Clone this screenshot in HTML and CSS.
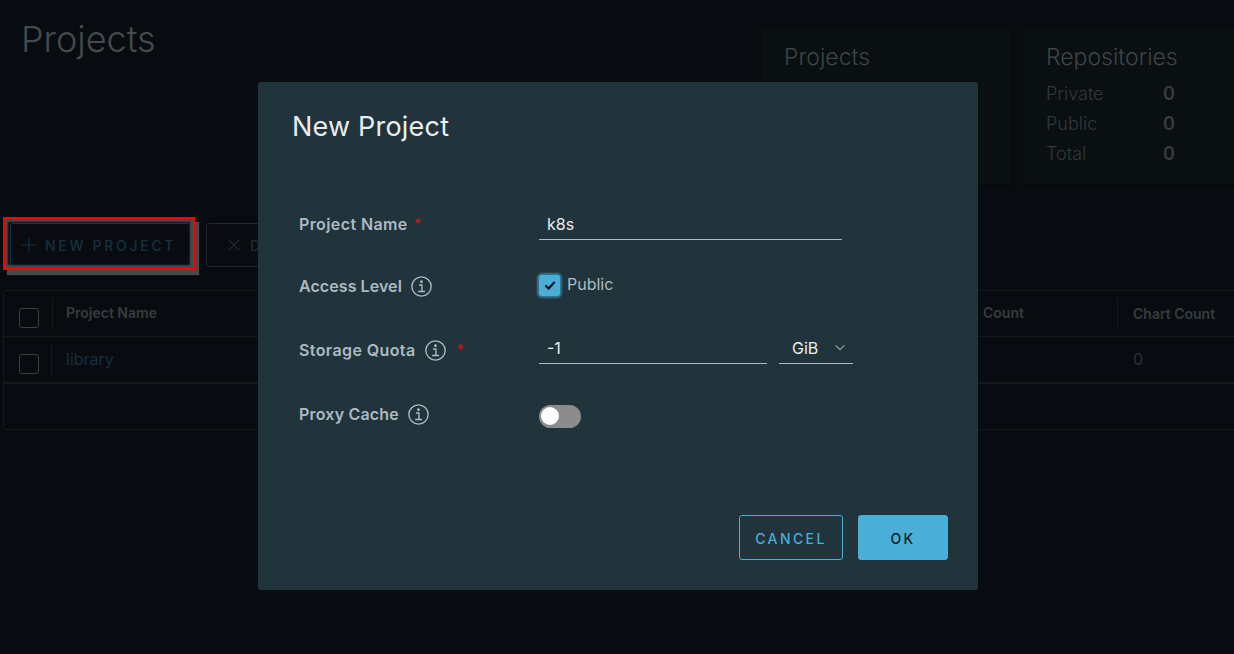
FILE: index.html
```html
<!DOCTYPE html>
<html lang="en">
<head>
<meta charset="utf-8">
<title>Projects</title>
<link rel="stylesheet" href="styles.css">
</head>
<body>
<main class="page">
  <section class="top">
    <h1 class="page-title">Projects</h1>
    <div class="cards">
      <article class="card card-projects">
        <h2 class="card-title">Projects</h2>
      </article>
      <article class="card card-repos">
        <h2 class="card-title">Repositories</h2>
        <dl class="stats">
          <div class="stat"><dt>Private</dt><dd>0</dd></div>
          <div class="stat"><dt>Public</dt><dd>0</dd></div>
          <div class="stat"><dt>Total</dt><dd>0</dd></div>
        </dl>
      </article>
    </div>
  </section>

  <section class="toolbar">
    <button class="tool tool-new" type="button">
      <svg class="tool-icon" viewBox="0 0 16 16"><path d="M8 1v14M1 8h14"/></svg>
      <span>NEW PROJECT</span>
    </button>
    <button class="tool tool-delete" type="button">
      <svg class="tool-icon" viewBox="0 0 16 16"><path d="M2.5 2.5l11 11M13.5 2.5l-11 11"/></svg>
      <span>DELETE</span>
    </button>
  </section>

  <section class="grid">
    <div class="grid-row grid-head">
      <span class="cell-check"><span class="box"></span></span>
      <span class="cell-name">Project Name</span>
      <span class="cell-count">Count</span>
      <span class="cell-chart">Chart Count</span>
    </div>
    <div class="grid-row grid-body">
      <span class="cell-check"><span class="box"></span></span>
      <span class="cell-name link">library</span>
      <span class="cell-count"></span>
      <span class="cell-chart cell-plain">0</span>
    </div>
    <div class="grid-foot"></div>
  </section>
</main>

<div class="modal">
  <h3 class="modal-title">New Project</h3>
  <form class="form">
    <div class="field">
      <label class="label label-first">Project Name<span class="req req-name">*</span></label>
      <div class="control"><span class="input input-name">k8s</span></div>
    </div>
    <div class="field">
      <label class="label label-access">Access Level
        <svg class="info" viewBox="0 0 20 20"><circle cx="10" cy="10" r="9.2"/><path d="M7.6 8.6h2.8v6M6.8 14.8h6.6"/><circle class="dot" cx="10" cy="5.4" r="1.3"/></svg>
      </label>
      <div class="control control-check">
        <span class="check"><svg viewBox="0 0 12 12"><path d="M2 6.2l2.8 2.8L10 3.4"/></svg></span>
        <span class="check-label">Public</span>
      </div>
    </div>
    <div class="field">
      <label class="label">Storage Quota
        <svg class="info" viewBox="0 0 20 20"><circle cx="10" cy="10" r="9.2"/><path d="M7.6 8.6h2.8v6M6.8 14.8h6.6"/><circle class="dot" cx="10" cy="5.4" r="1.3"/></svg>
        <span class="req req-quota">*</span>
      </label>
      <div class="control control-quota">
        <span class="input input-quota">-1</span>
        <span class="select">GiB<svg viewBox="0 0 12 8"><path d="M1 1.5l5 5 5-5"/></svg></span>
      </div>
    </div>
    <div class="field">
      <label class="label label-proxy">Proxy Cache
        <svg class="info" viewBox="0 0 20 20"><circle cx="10" cy="10" r="9.2"/><path d="M7.6 8.6h2.8v6M6.8 14.8h6.6"/><circle class="dot" cx="10" cy="5.4" r="1.3"/></svg>
      </label>
      <div class="control"><span class="toggle"><span class="knob"></span></span></div>
    </div>
  </form>
  <div class="modal-foot">
    <button class="btn btn-cancel" type="button">CANCEL</button>
    <button class="btn btn-ok" type="button">OK</button>
  </div>
</div>
</body>
</html>
```
FILE: styles.css
```css
*, *::before, *::after { box-sizing: border-box; }
html, body { margin: 0; height: 100%; }
body {
  background: #080c10;
  font-family: Inter, "Noto Sans", sans-serif;
  overflow: hidden;
  width: 1234px;
  height: 654px;
  position: relative;
}
.page { padding-left: 3px; width: 1234px; height: 654px; overflow: hidden; }

.top { display: flex; height: 184px; }
.page-title {
  margin: 15px 0 0 18px;
  font: 300 36px/48px Inter, sans-serif;
  color: #444a4d;
  width: 741px;
  flex: none;
}
.cards { display: flex; gap: 14px; padding-top: 28px; flex: none; }
.card {
  width: 248px;
  height: 156px;
  background: #0a0f12;
  border-radius: 3px;
  box-shadow: 0 4px 0 #060a0c;
  padding: 15px 22px;
  flex: none;
}
.card-repos { width: 260px; }
.card-title { margin: 0; font: 300 23px/28px Inter, sans-serif; color: #3f4447; }
.stats { margin: 8px 0 0; }
.stat { display: flex; height: 30px; align-items: center; font: 300 18px/30px Inter, sans-serif; color: #33383b; }
.stat dt { width: 117px; }
.stat dd { margin: 0; font-weight: 600; color: #373c3f; }

.toolbar { display: flex; gap: 15px; padding: 39px 0 0 7px; height: 106px; }
.tool {
  height: 44px;
  background: transparent;
  border: 1px solid #1a2a33;
  border-radius: 3px;
  display: flex;
  align-items: center;
  gap: 8px;
  padding: 2px 0 0 10px;
  font: 500 14px/1 Inter, sans-serif;
  letter-spacing: 2.7px;
  color: #16303f;
  position: relative;
}
.tool-new { width: 181px; border-color: #1b3341; }
.tool-new::after {
  content: "";
  position: absolute;
  left: -8px;
  top: -7px;
  width: 192px;
  height: 53px;
  border: 2px solid #f00;
  box-shadow: 4px 5px 1px #484848, inset 0 0 2px 3px #4a4a4a;
}
.tool-delete { width: 140px; padding-left: 19px; border-color: #22282c; color: #22282c; }
.tool-icon { width: 16px; height: 16px; margin-top: -2px; fill: none; stroke: currentColor; stroke-width: 1.1; flex: none; }

.grid { width: 1240px; height: 140px; border: 1px solid #14191c; border-radius: 3px; }
.grid-row { display: flex; align-items: center; border-bottom: 1px solid #14191c; }
.grid-head { height: 46px; color: #373c3f; font: 600 14px/1 Inter, sans-serif; }
.grid-body { height: 47px; color: #33383b; font: 400 16px/1 Inter, sans-serif; border-bottom-width: 2px; }
.grid-body .cell-check { width: 48px; }
.cell-check { width: 49px; height: 32px; padding: 10px 0 0 15px; border-right: 1px solid #14191c; flex: none; }
.grid-body .cell-name { margin-left: 14px; }
.box { display: block; width: 20px; height: 20px; border: 1px solid #3a3f42; border-radius: 3px; }
.cell-name { width: 917px; margin-left: 13px; padding-bottom: 1px; flex: none; }
.cell-count { width: 134px; padding-bottom: 1px; flex: none; }
.cell-chart { padding-left: 15px; border-left: 1px solid #14191c; height: 32px; line-height: 31px; flex: none; }
.cell-plain { border-left: 0; padding-left: 16px; color: #2e3336; }
.link { color: #14303f; }

.modal {
  position: absolute;
  left: 258px;
  top: 82px;
  width: 720px;
  height: 508px;
  background: #21333b;
  border-radius: 3px;
  display: flex;
  flex-direction: column;
  padding: 0 30px 30px 34px;
}
.modal-title {
  margin: 27px 0 0;
  font: 400 27px/36px Inter, sans-serif;
  color: #eaedf0;
  letter-spacing: .2px;
}
.form { margin: 47px 0 0 7px; }
.field { display: flex; align-items: center; height: 64px; }
.label {
  width: 240px;
  font: 600 16px/24px Inter, sans-serif;
  letter-spacing: .4px;
  color: #acbac3;
  display: flex;
  align-items: center;
  gap: 9px;
  flex: none;
  margin-bottom: 4px;
}
.label-first { margin: 0; }
.label-access { letter-spacing: .07px; }
.label-proxy { letter-spacing: .2px; }
.req { color: #b8200f; font-size: 14px; }
.req-name { margin-left: -3px; }
.req-quota { margin-left: 2px; }
.info { width: 21px; height: 21px; fill: none; stroke: #acbac3; stroke-width: 1.3; flex: none; }
.info .dot { fill: #acbac3; stroke: none; }
.control { display: flex; align-items: center; }
.input {
  display: block;
  height: 32px;
  padding-left: 8px;
  border-bottom: 1px solid #acbac3;
  color: #eaedf0;
  font: 400 16px/32px Inter, sans-serif;
}
.input-name { width: 303px; }
.input-quota { width: 228px; }
.control-quota { gap: 12px; margin-bottom: 8px; }
.select {
  width: 74px;
  height: 31px;
  border-bottom: 1px solid #acbac3;
  color: #eaedf0;
  font: 400 16px/30px Inter, sans-serif;
  padding-left: 13px;
  display: flex;
  align-items: center;
  gap: 16px;
}
.select svg { width: 12px; height: 7px; fill: none; stroke: #9aa7af; stroke-width: 1.2; }
.control-check { gap: 7px; margin-bottom: 6px; }
.check {
  width: 21px;
  height: 21px;
  background: #49afd9;
  border-radius: 3px;
  box-shadow: 0 0 2px 2px rgba(73,175,217,.55);
  display: flex;
  align-items: center;
  justify-content: center;
}
.check svg { width: 14px; height: 14px; fill: none; stroke: #0b1a22; stroke-width: 2; }
.check-label { font: 400 16px/24px Inter, sans-serif; color: #acbac3; padding-bottom: 2px; }
.toggle { display: block; width: 42px; height: 23px; border-radius: 12px; background: #8c8c8c; padding: 2px; }
.knob { display: block; width: 18px; height: 18px; margin-top: .5px; border-radius: 50%; background: #fff; }

.modal-foot { margin-top: auto; display: flex; justify-content: flex-end; gap: 15px; }
.btn {
  height: 45px;
  padding: 2px 0 0;
  border-radius: 3px;
  font: 500 14px/1 Inter, sans-serif;
  letter-spacing: 2.4px;
}
.btn-cancel { width: 104px; background: transparent; border: 1px solid #49afd9; color: #49afd9; }
.btn-ok { width: 90px; background: #49afd9; border: 1px solid #49afd9; color: #0b1a22; }
```
